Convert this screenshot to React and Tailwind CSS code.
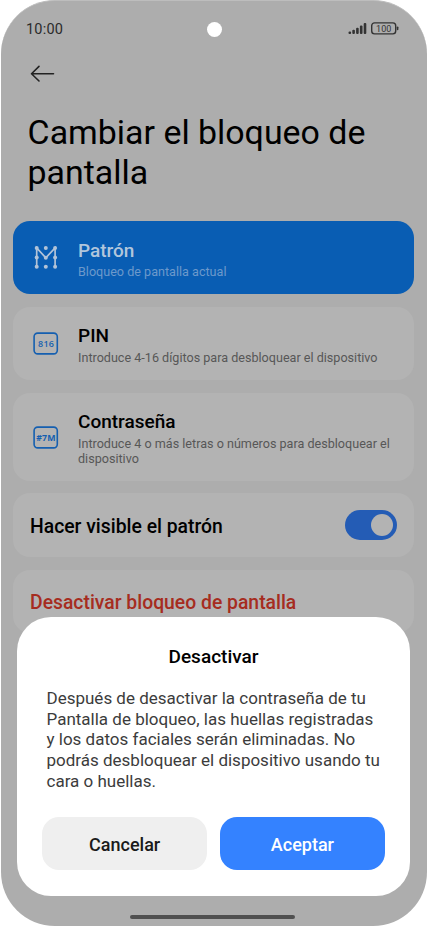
import { useState } from "react"

const OPTIONS = [
  { id: "pattern", title: "Patrón", text: "Bloqueo de pantalla actual", icon: PatternIcon },
  { id: "pin", title: "PIN", text: "Introduce 4-16 dígitos para desbloquear el dispositivo", icon: PinIcon },
  { id: "password", title: "Contraseña", text: "Introduce 4 o más letras o números para desbloquear el dispositivo", icon: PasswordIcon },
]

export default function App() {
  const [visible, setVisible] = useState(true)

  return (
    <div className="h-[926px] w-[427px] bg-white pl-px font-['Roboto','Liberation_Sans',sans-serif]">
      <div className="relative h-full overflow-hidden rounded-[54px] border-t border-[#bdbdbd] bg-[#adadad]">
        <StatusBar />

        <header className="pt-[22px] pl-[26px]">
          <button className="block" aria-label="Atrás">
            <BackIcon />
          </button>
          <h1 className="mt-[30px] pl-[0.6px] text-[33.9px] leading-[40px] font-normal text-black">
            Cambiar el bloqueo de
            <br />
            pantalla
          </h1>
        </header>

        <main className="mt-[28px] flex flex-col gap-[12.8px] pr-[13px] pl-[12px]">
          {OPTIONS.map((o) => (
            <OptionCard key={o.id} option={o} active={o.id === "pattern"} />
          ))}

          <div className="flex h-[64px] items-center justify-between rounded-[17px] bg-[#b3b3b3] pr-[17px] pl-[17px]">
            <span className="pt-[3px] text-[19.35px] leading-[24px] font-medium text-black">Hacer visible el patrón</span>
            <Toggle on={visible} onChange={() => setVisible(!visible)} />
          </div>

          <div className="flex h-[63px] items-center rounded-[17px] bg-[#b3b3b3] pl-[17px]">
            <span className="pt-[2px] text-[19.35px] leading-[24px] font-medium text-[#a62c20]">Desactivar bloqueo de pantalla</span>
          </div>
        </main>

        <ConfirmDialog />
        <div className="absolute bottom-[7px] left-[129px] h-[4px] w-[165px] rounded-full bg-[#505050]" />
      </div>
    </div>
  )
}

function StatusBar() {
  return (
    <div className="relative flex h-[42px] items-start justify-between pt-[18px] pr-[28px] pl-[25px]">
      <span className="pt-[1px] text-[14.5px] leading-[20px] tracking-[0.2px] text-[#2b2b2b]">10:00</span>
      <div className="absolute top-[21px] left-[205.5px] h-[15px] w-[15px] rounded-full bg-white" />
      <svg className="mt-[3px]" width="51" height="14" viewBox="0 0 51 14" fill="#333333">
        <rect x="0.5" y="9.5" width="2.6" height="2.5" rx="1" />
        <rect x="4.3" y="7.7" width="2.6" height="4.3" rx="1" />
        <rect x="8.1" y="5.7" width="2.6" height="6.3" rx="1" />
        <rect x="11.9" y="3.5" width="2.6" height="8.5" rx="1" />
        <rect x="15.7" y="1" width="2.6" height="11" rx="1" />
        <rect x="23.7" y="0.9" width="24" height="11" rx="2.8" fill="none" stroke="#333333" strokeWidth="1.4" />
        <rect x="48.8" y="4.4" width="1.6" height="3.8" rx="0.8" />
        <text x="35.8" y="9.8" textAnchor="middle" fontSize="9" letterSpacing="0.1" className="font-['Roboto',sans-serif]">100</text>
      </svg>
    </div>
  )
}

function OptionCard({ option, active }) {
  const Icon = option.icon
  return (
    <div className={`flex items-center rounded-[17px] pt-[17px] pr-[16px] pb-[15px] pl-[20px] ${active ? "bg-[#095db3]" : "bg-[#b3b3b3]"}`}>
      <Icon />
      <div className="ml-[19px]">
        <div className={`pt-[0.6px] text-[19px] leading-[24px] font-medium ${active ? "text-[#b2c6dc]" : "text-black"}`}>{option.title}</div>
        <div className={`mt-[1.4px] text-[12.6px] leading-[15px] ${active ? "text-[#6c99cb]" : "text-[#575757]"}`}>{option.text}</div>
      </div>
    </div>
  )
}

function Toggle({ on, onChange }) {
  return (
    <button
      role="switch"
      aria-checked={on}
      onClick={onChange}
      className={`flex h-[30px] w-[52px] items-center rounded-full px-[4px] ${on ? "justify-end bg-[#245cb5]" : "justify-start bg-[#8f8f8f]"}`}
    >
      <span className="h-[22px] w-[22px] rounded-full bg-[#b3b3b3]" />
    </button>
  )
}

function ConfirmDialog() {
  return (
    <div role="dialog" className="absolute top-[616px] left-[16px] h-[279px] w-[393px] rounded-[34px] bg-white px-[25px] pt-[28px]">
      <h2 className="text-center text-[19px] leading-[24px] font-medium text-black">Desactivar</h2>
      <p className="mt-[19px] pl-[4.5px] text-[17px] leading-[20.7px] whitespace-nowrap text-[#3c3c3c]">
        Después de desactivar la contraseña de tu
        <br />
        Pantalla de bloqueo, las huellas registradas
        <br />
        y los datos faciales serán eliminadas. No
        <br />
        podrás desbloquear el dispositivo usando tu
        <br />
        cara o huellas.
      </p>
      <div className="mt-[25px] grid grid-cols-2 gap-[12.5px]">
        <button className="h-[53px] rounded-[17px] bg-[#efefef] pt-[2px] text-[18px] font-medium text-[#1a1a1a]">Cancelar</button>
        <button className="h-[53px] rounded-[17px] bg-[#3482ff] pt-[2px] text-[18px] font-medium text-white">Aceptar</button>
      </div>
    </div>
  )
}

function BackIcon() {
  return (
    <svg width="30" height="18" viewBox="0 0 30 18" fill="none" stroke="#222222" strokeWidth="1.6" strokeLinecap="round" strokeLinejoin="round">
      <path d="M26.5 8.7H4.5M12 1.4L4.5 8.7L12 16" />
    </svg>
  )
}

function PatternIcon() {
  const dots = [
    [3.7, 3], [12.8, 3], [22.1, 3],
    [3.7, 12.5], [12.8, 12.8], [22.1, 12.5],
    [3.7, 21.8], [12.8, 21.8], [22.1, 21.8],
  ]
  return (
    <svg className="shrink-0" width="26" height="26" viewBox="0 0 26 26" fill="#b2c3d8">
      <path d="M3.7 21.8V3L12.8 12.8L22.1 3V21.8" fill="none" stroke="#b2c3d8" strokeWidth="1.7" />
      {dots.map(([x, y]) => (
        <circle key={`${x}-${y}`} cx={x} cy={y} r="2" />
      ))}
    </svg>
  )
}

function PinIcon() {
  return (
    <svg className="shrink-0" width="26" height="26" viewBox="0 0 26 26">
      <rect x="1.1" y="2.1" width="23.2" height="20.8" rx="3.6" fill="none" stroke="#155fb0" strokeWidth="1.6" />
      <text x="13.1" y="15.7" textAnchor="middle" fontSize="9" fontWeight="600" letterSpacing="0.2" fill="#155fb0" className="font-['Open_Sans',sans-serif]">816</text>
    </svg>
  )
}

function PasswordIcon() {
  return (
    <svg className="shrink-0" width="26" height="26" viewBox="0 0 26 26">
      <rect x="1.1" y="2.1" width="23.2" height="20.8" rx="3.6" fill="none" stroke="#155fb0" strokeWidth="1.6" />
      <text x="12.9" y="15.7" textAnchor="middle" fontSize="8.8" fontWeight="700" letterSpacing="0.1" fill="#155fb0" className="font-['Open_Sans',sans-serif]">#7M</text>
    </svg>
  )
}
